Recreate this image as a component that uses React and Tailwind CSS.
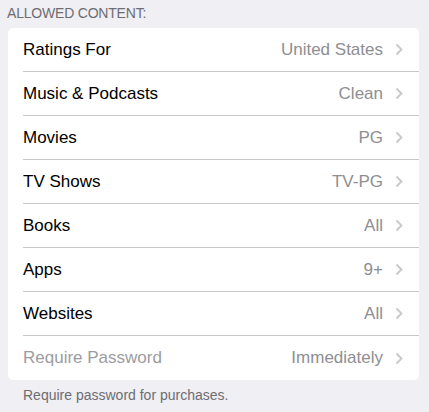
import React from 'react';

const rows = [
    { label: 'Ratings For', value: 'United States' },
    { label: 'Music & Podcasts', value: 'Clean' },
    { label: 'Movies', value: 'PG' },
    { label: 'TV Shows', value: 'TV-PG' },
    { label: 'Books', value: 'All' },
    { label: 'Apps', value: '9+' },
    { label: 'Websites', value: 'All' },
    { label: 'Require Password', value: 'Immediately', disabled: true },
];

const Chevron = () => (
    <svg width="8" height="13" viewBox="0 0 8 13" className="ml-3 shrink-0">
        <path d="M1.5 1.5 L6.5 6.5 L1.5 11.5" fill="none" stroke="#c7c7cc" strokeWidth="1.8" />
    </svg>
);

export default function App() {
    return (
        <div className="w-[429px] h-[412px] bg-[#efeff4] overflow-hidden" style={{ fontFamily: '"Liberation Sans", Arial, sans-serif' }}>
            <div className="pl-[7px] pt-[3px] h-7 text-[14px] leading-[21px] text-[#6d6d72] tracking-[-0.2px]">ALLOWED CONTENT:</div>
            <div className="ml-2 mr-[10px] bg-white rounded-[5px]">
                {rows.map((row, i) => (
                    <div key={row.label} className="pl-[15px] h-11 flex">
                        <div className={`flex-1 flex items-center pr-4 ${i < rows.length - 1 ? 'border-b border-[#c8c7cc]' : ''}`}>
                            <span className={`flex-1 text-[17px] ${row.disabled ? 'text-[#9c9ca1]' : 'text-black'}`}>{row.label}</span>
                            <span className="text-[17px] text-[#8e8e93]">{row.value}</span>
                            <Chevron />
                        </div>
                    </div>
                ))}
            </div>
            <div className="pl-[23px] pt-[5px] text-[14px] leading-[21px] text-[#6d6d72]">Require password for purchases.</div>
        </div>
    );
}
